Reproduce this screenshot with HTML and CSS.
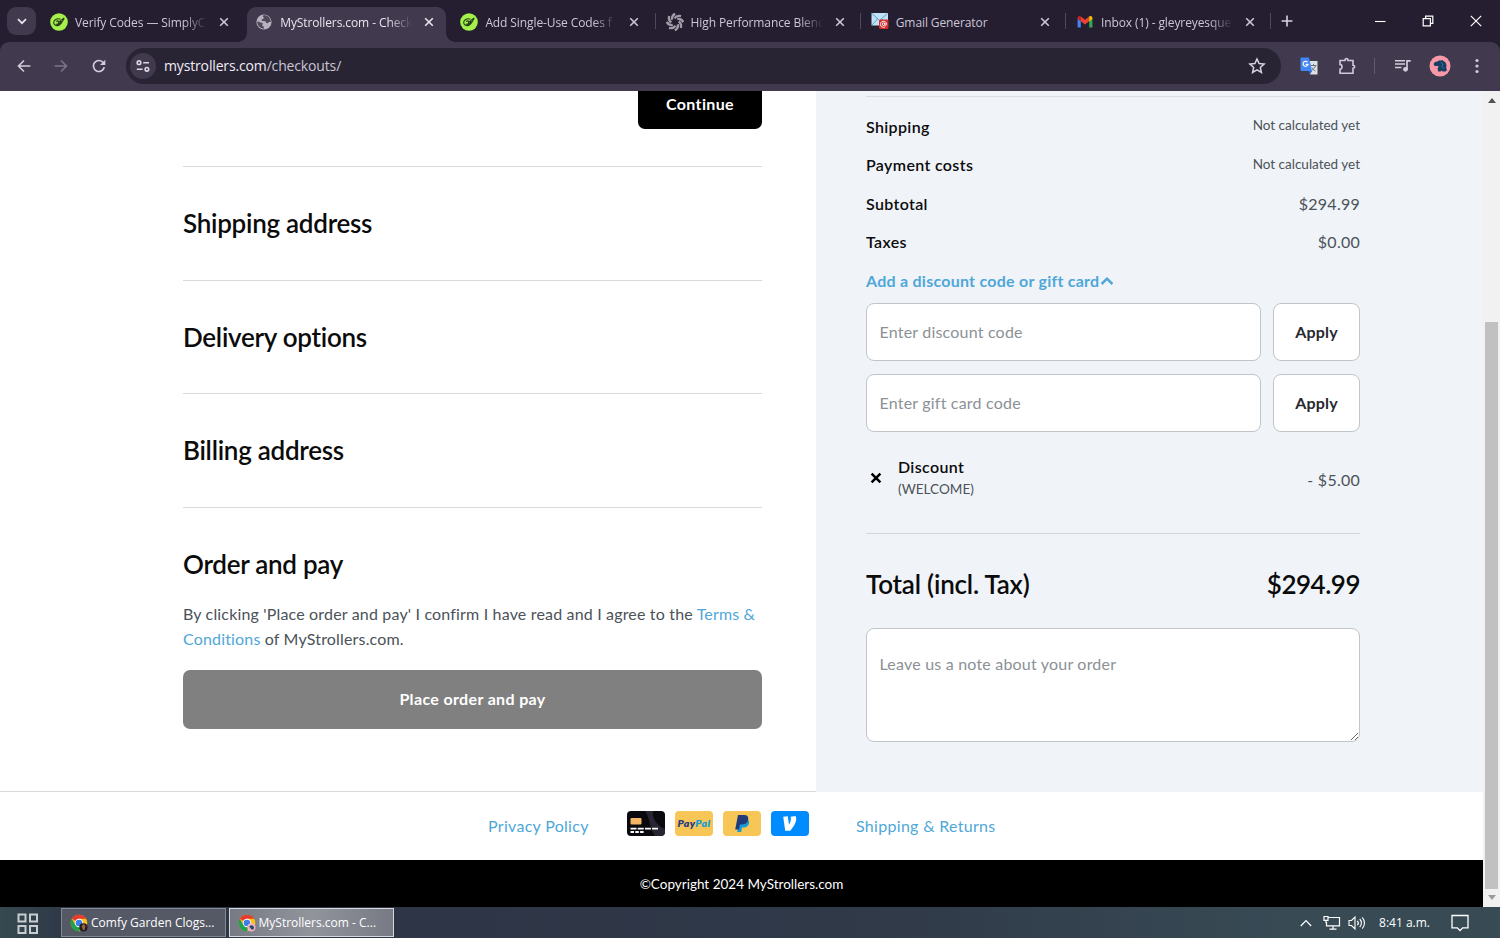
FILE: index.html
```
<!DOCTYPE html>
<html lang="en">
<head>
    <meta charset="utf-8">
    <title>MyStrollers.com - Checkout</title>
    <link rel="stylesheet" href="styles.css">
</head>
<body>
    <svg class="defs" width="0" height="0">
        <symbol id="close" viewBox="0 0 10 10"><path d="M1.2 1.2l7.6 7.6M8.8 1.2L1.2 8.8" fill="none" stroke="currentColor" stroke-width="1.6"/></symbol>
        <symbol id="simply" viewBox="0 0 18 18"><circle cx="9" cy="9" r="8.8" fill="#a5f04b"/><path d="M10.5 6.3C7 4.800 3.400 7.200 3.700 10c.3 2.700 4 3.400 6.200 1.500 1.400-1.200 2.600-3 4.300-6.300M6.300 8.600c1.400-1.500 2.700-.4 2.300.9l5.600-4.600M5.800 11c2 .8 4.200-.2 5.600-2.700" fill="none" stroke="#22391a" stroke-width="1.100"/></symbol>
        <symbol id="chrome" viewBox="0 0 18 18"><circle cx="9" cy="9" r="8.300" fill="#fbc116"/><path d="M9 9L1.800 4.850A8.300 8.300 0 0 1 16.200 4.850H9z" fill="#e33b2e"/><path d="M1.800 4.850A8.300 8.300 0 0 0 9 17.300L12.600 11 9 9 5.400 11z" fill="#22a04b"/><circle cx="9" cy="9" r="4.200" fill="#fff"/><circle cx="9" cy="9" r="3.300" fill="#3b7ded"/></symbol>
    </svg>

    <header class="tabstrip">
        <div class="tab-search"><svg width="10" height="7" viewBox="0 0 10 7"><path d="M1 1.200l4 4 4-4" fill="none" stroke="#e6e0ec" stroke-width="1.800"/></svg></div>
        <div class="tab">
            <svg class="favicon"><use href="#simply"/></svg>
            <span class="tab-title fade">Verify Codes — SimplyC</span>
            <svg class="tab-close"><use href="#close"/></svg>
        </div>
        <div class="tab active">
            <svg class="favicon" viewBox="0 0 18 18"><circle cx="9" cy="9" r="7.600" fill="#b6b0bf"/><path d="M8.800 1.900C7.600 3 7.600 3.800 8.600 4.300c.9.5.2 1.300-1 1.700-1.300.5-1.500 2 .2 2 2 0 3.100.3 3.300 1.500.2 1 1.500 1 2.300.1.500-.5 1.300-.6 2.400-.5A6.900 6.900 0 0 0 8.800 1.900zM2.200 8.600c1.400 0 2.400.7 3.500.9 1.800.2 2.600 1 1.800 2-.8.9-.3 1.600.6 1.800 1 .2 1 1 .6 2.500A6.900 6.900 0 0 1 2.200 8.600z" fill="#514959"/></svg>
            <span class="tab-title fade">MyStrollers.com - Check</span>
            <svg class="tab-close"><use href="#close"/></svg>
        </div>
        <div class="tab">
            <svg class="favicon"><use href="#simply"/></svg>
            <span class="tab-title fade">Add Single-Use Codes f</span>
            <svg class="tab-close"><use href="#close"/></svg>
        </div>
        <div class="tab divided">
            <svg class="favicon" viewBox="0 0 18 18">
                <g fill="none" stroke="#a19da8" stroke-width="2.300">
                    <path id="blade" d="M8.500 5.300Q11 2 15 3.200"/>
                    <use href="#blade" transform="rotate(45 9 9)"/>
                    <use href="#blade" transform="rotate(90 9 9)"/>
                    <use href="#blade" transform="rotate(135 9 9)"/>
                    <use href="#blade" transform="rotate(180 9 9)"/>
                    <use href="#blade" transform="rotate(225 9 9)"/>
                    <use href="#blade" transform="rotate(270 9 9)"/>
                    <use href="#blade" transform="rotate(315 9 9)"/>
                </g>
            </svg>
            <span class="tab-title fade">High Performance Blenc</span>
            <svg class="tab-close"><use href="#close"/></svg>
        </div>
        <div class="tab divided">
            <svg class="favicon" viewBox="0 0 18 18"><path d="M.5 0h16.500v12.500H.5z" fill="#bfe2f5"/><path d="M1 .5l7.500 7 8-7M1 12l5.500-6M11 6l5 5" fill="none" stroke="#5e9fc6" stroke-width="1"/><rect x="8" y="6.500" width="9.500" height="9.500" rx="1.500" fill="#d82c2c"/><circle cx="12.600" cy="11.200" r="1.300" fill="none" stroke="#fff"/><path d="M14 9.800v2c.2 1 1.700.8 1.600-.8-.2-3.800-6.200-3.600-6.200.4 0 2.700 2.800 3.500 4.800 2.500" fill="none" stroke="#fff" stroke-width=".9"/></svg>
            <span class="tab-title">Gmail Generator</span>
            <svg class="tab-close"><use href="#close"/></svg>
        </div>
        <div class="tab divided">
            <svg class="favicon" viewBox="0 0 18 18"><path d="M1.600 5v9.500h3.200V7.800z" fill="#4285f4"/><path d="M13.200 7.800v6.700h3.200V5z" fill="#34a853"/><path d="M1.600 5.200c0-2.200 2-2.700 3.300-1.700v5L1.600 6z" fill="#c5221f"/><path d="M4.800 3.500L9 6.700l4.200-3.200v4.800L9 11.400 4.800 8.300z" fill="#ea4335"/><path d="M13.200 3.500c1.400-1 3.200-.4 3.200 1.700V6l-3.200 2.400z" fill="#fbbc04"/></svg>
            <span class="tab-title fade">Inbox (1) - gleyreyesque</span>
            <svg class="tab-close"><use href="#close"/></svg>
        </div>
        <div class="new-tab"><svg width="12" height="12" viewBox="0 0 12 12"><path d="M6 .6v10.800M.6 6h10.800" stroke="#d9d2e2" stroke-width="1.600"/></svg></div>
        <div class="window-buttons">
            <svg width="12" height="12" viewBox="0 0 12 12"><path d="M1 6.500h10.500" stroke="#fff" stroke-width="1.100"/></svg>
            <svg width="12" height="12" viewBox="0 0 12 12"><path d="M1.200 3.600h7.200v7.200H1.200zM3.600 3.400V1.200h7.200v7.200H8.600" fill="none" stroke="#fff" stroke-width="1.200"/></svg>
            <svg width="12" height="12" viewBox="0 0 12 12"><path d="M.8.8l10.400 10.400M11.200.8L.8 11.200" stroke="#fff" stroke-width="1.200"/></svg>
        </div>
    </header>

    <nav class="toolbar">
        <div class="nav-buttons">
            <svg width="14" height="14" viewBox="0 0 14 14"><path d="M13.400 7H1.800M7 1.500L1.500 7 7 12.500" fill="none" stroke="#d3ccdc" stroke-width="1.600"/></svg>
            <svg width="14" height="14" viewBox="0 0 14 14"><path d="M.6 7h11.600M7 1.500L12.500 7 7 12.500" fill="none" stroke="#7d7489" stroke-width="1.600"/></svg>
            <svg width="14" height="14" viewBox="0 0 14 14"><path d="M12.300 8.300A5.500 5.500 0 1 1 11.300 3.600L12.600 5" fill="none" stroke="#d3ccdc" stroke-width="1.700"/><path d="M13.300.8v5.300H8z" fill="#d3ccdc"/></svg>
        </div>
        <div class="omnibox">
            <div class="site-info"><svg width="14" height="12" viewBox="0 0 14 12"><g fill="none" stroke="#dcd6e4" stroke-width="1.600"><circle cx="3" cy="2.700" r="1.800"/><path d="M7.200 2.700h5.800M.8 9.300h5.800"/><circle cx="10.900" cy="9.300" r="1.800"/></g></svg></div>
            <span class="url">mystrollers.com<span class="path">/checkouts/</span></span>
            <svg class="star" width="18" height="18" viewBox="0 0 18 18"><path d="M9 2l2.100 4.600 5 .5-3.800 3.300 1.100 5L9 12.800l-4.400 2.600 1.100-5L1.900 7.100l5-.5z" fill="none" stroke="#d9d3e2" stroke-width="1.500"/></svg>
        </div>
        <div class="extensions">
            <svg class="translate" width="18" height="18" viewBox="0 0 18 18"><path d="M7 4h10.500v13.500H10z" fill="#dde1e5"/><path d="M10.500 8.500h6M13.500 7v1.500M15.500 8.500c-.5 2.500-2 4-4 5M12 10.500c1 2 2 3 3.500 3.500" fill="none" stroke="#6b7681" stroke-width="1"/><path d="M.5.5h8.500L12 14H1.500a1 1 0 0 1-1-1z" fill="#4285f4"/><path d="M8.300 14H12l-2 3.500z" fill="#2f61bd"/><path d="M7.500 5.200A2.500 2.500 0 1 0 8 7.400H5.600" fill="none" stroke="#fff" stroke-width="1.200"/></svg>
            <svg class="puzzle" width="18" height="18" viewBox="0 0 18 18"><path d="M2 3.500h5C7 1 10 1 10 3.500h5v4.700c2.200 0 2.200 3 0 3V16.200H2v-3.900c2.700-.2 2.700-4.700 0-4.900z" fill="none" stroke="#d0c9d9" stroke-width="1.600"/></svg>
            <span class="divider"></span>
            <svg class="media" width="18" height="14" viewBox="0 0 18 14"><path d="M1 1.800h10M1 5.100h10M1 8.400h6.500" stroke="#d3ccdc" stroke-width="1.500"/><path d="M13 10V1.800h3.700" fill="none" stroke="#d3ccdc" stroke-width="1.700"/><circle cx="11.500" cy="10.300" r="2.400" fill="#d3ccdc"/></svg>
            <svg class="avatar" width="22" height="22" viewBox="0 0 22 22"><circle cx="11" cy="11" r="10.500" fill="#f799a7"/><path d="M4.500 9l1.500-2 2.500-.5L10 5.500l3.500-.2 3 2.200 1 2.500-.3 3 .8 2-1.500 1.500h-3l-1-1-.8 1H9.200l-.7-3.300 1.300-1.400-2-1-2 .5z" fill="#173f64"/><path d="M11.500 7l2.500 2-1 2.500 2 2" fill="none" stroke="#35749c" stroke-width="1"/></svg>
            <svg class="menu-dots" width="4" height="16" viewBox="0 0 4 16"><g fill="#d3ccdc"><circle cx="2" cy="2.500" r="1.600"/><circle cx="2" cy="8" r="1.600"/><circle cx="2" cy="13.500" r="1.600"/></g></svg>
        </div>
    </nav>

    <div class="viewport">
        <div class="page">
            <div class="columns">
                <main class="checkout">
                    <div class="continue-row"><button class="continue">Continue</button></div>
                    <section class="step"><h2>Shipping address</h2></section>
                    <section class="step"><h2>Delivery options</h2></section>
                    <section class="step"><h2>Billing address</h2></section>
                    <section class="step last">
                        <h2>Order and pay</h2>
                        <p>By clicking 'Place order and pay' I confirm I have read and I agree to the <a href="#">Terms &amp;<br>Conditions</a> of MyStrollers.com.</p>
                        <button class="place-order">Place order and pay</button>
                    </section>
                </main>
                <aside class="summary">
                    <div class="costs">
                        <div class="cost-row"><b>Shipping</b><small>Not calculated yet</small></div>
                        <div class="cost-row"><b>Payment costs</b><small>Not calculated yet</small></div>
                        <div class="cost-row"><b>Subtotal</b><span>$294.99</span></div>
                        <div class="cost-row"><b>Taxes</b><span>$0.00</span></div>
                    </div>
                    <a class="discount-toggle" href="#">Add a discount code or gift card<svg width="14" height="10" viewBox="0 0 14 10"><path d="M1.600 8L7 2.700 12.400 8" fill="none" stroke="currentColor" stroke-width="2.500"/></svg></a>
                    <div class="code-row">
                        <input type="text" placeholder="Enter discount code">
                        <button>Apply</button>
                    </div>
                    <div class="code-row">
                        <input type="text" placeholder="Enter gift card code">
                        <button>Apply</button>
                    </div>
                    <div class="discount">
                        <svg width="12" height="12" viewBox="0 0 12 12"><path d="M1.600 1.600l8.800 8.800M10.400 1.600l-8.800 8.800" stroke="#000" stroke-width="2.500"/></svg>
                        <div class="discount-name"><b>Discount</b><small>(WELCOME)</small></div>
                        <span class="amount">- $5.00</span>
                    </div>
                    <div class="total"><span>Total (incl. Tax)</span><span class="total-price">$294.99</span></div>
                    <textarea placeholder="Leave us a note about your order"></textarea>
                </aside>
            </div>
            <footer class="links">
                <a href="#">Privacy Policy</a>
                <div class="payments">
                    <svg width="38" height="25" viewBox="0 0 38 25"><rect width="38" height="25" rx="4" fill="#09090e"/><path d="M18 0h8c-1 9 5 15 12 18v3c0 2-2 4-4 4h-6C22 17 24 9 18 0z" fill="#272532"/><rect x="3.500" y="7" width="11" height="6.500" rx="1" fill="#f3b562"/><path d="M3.500 17.700h27.500" stroke="#fff" stroke-width="1.800" stroke-dasharray="6 1.200"/><path d="M3.500 21h13.500" stroke="#fff" stroke-width="1.800" stroke-dasharray="3.500 1.300"/></svg>
                    <svg width="38" height="25" viewBox="0 0 38 25"><rect width="38" height="25" rx="4" fill="#f7c657"/><text class="paypal" x="2.500" y="16" textLength="33" lengthAdjust="spacingAndGlyphs"><tspan fill="#263b80">Pay</tspan><tspan fill="#159bd2">Pal</tspan></text></svg>
                    <svg width="38" height="25" viewBox="0 0 38 25"><rect width="38" height="25" rx="4" fill="#f7c657"/><path d="M17 8h7c3.500 1 3 8.500-3.500 8.500h-1.500l-.8 4.500h-4z" fill="#179bd7"/><path d="M15 4h6.500c4 0 4.500 3.500 3 6.500-1 2.300-3 3-6 3h-1.500L16 18.500h-3.800z" fill="#213b7a"/></svg>
                    <svg width="38" height="25" viewBox="0 0 38 25"><rect width="38" height="25" rx="4" fill="#008cff"/><path d="M12.200 5.800l4.600-.5 1.200 8.500c1.500-2.400 2.500-5.500 1.600-8l5-.9c2.200 4.800-1.800 10.200-5.300 14.900h-5.100z" fill="#fff"/></svg>
                </div>
                <a href="#">Shipping &amp; Returns</a>
            </footer>
            <div class="copyright">©Copyright 2024 MyStrollers.com</div>
        </div>
        <div class="scrollbar">
            <svg width="8" height="5" viewBox="0 0 8 5"><path d="M4 0l4 5H0z" fill="#505050"/></svg>
            <div class="thumb"></div>
            <svg width="8" height="5" viewBox="0 0 8 5"><path d="M4 5l4-5H0z" fill="#9b9b9b"/></svg>
        </div>
    </div>

    <div class="taskbar">
        <svg class="start" width="22" height="22" viewBox="0 0 22 22"><g fill="none" stroke="#c8ced0" stroke-width="2"><path d="M1.500 1.500h7v7h-7zM13 1.500h7v7h-7zM1.500 13h7v7h-7zM13 13h7v7h-7z"/></g></svg>
        <div class="task">
            <svg width="18" height="18" viewBox="0 0 18 18"><use href="#chrome"/><circle cx="13.400" cy="13.400" r="4.100" fill="#241b1b"/><path d="M11.500 12l2-2 2 2-1 4h-1.500z" fill="#96604b"/></svg>
            <span>Comfy Garden Clogs...</span>
        </div>
        <div class="task current">
            <svg width="18" height="18" viewBox="0 0 18 18"><use href="#chrome"/><circle cx="13.400" cy="13.400" r="4.100" fill="#f0b0bd"/><path d="M11 12.500l3-1.500 2 2-.5 2.500h-2z" fill="#254a70"/></svg>
            <span>MyStrollers.com - C...</span>
        </div>
        <div class="tray">
            <svg width="12" height="8" viewBox="0 0 12 8"><path d="M.8 7L6 1.500 11.200 7" fill="none" stroke="#fff" stroke-width="1.200"/></svg>
            <svg class="network" width="18" height="16" viewBox="0 0 18 16"><path d="M5.500 2.500h11v8.300H3.500V7M10 11v3M6.500 14.200h7M1 1.500h4v3.800H1zM3 5.300V8" fill="none" stroke="#fff" stroke-width="1.200"/></svg>
            <svg class="volume" width="18" height="16" viewBox="0 0 18 16"><path d="M1 5.500h2.500L7 2v12l-3.500-3.500H1zM9.300 5.800c1.300 1.300 1.300 3.100 0 4.400M11.700 4c2.300 2.300 2.300 5.700 0 8M14.200 2.300c3 3.200 3 8.200 0 11.400" fill="none" stroke="#fff" stroke-width="1.100"/></svg>
            <span class="clock">8:41 a.m.</span>
            <svg class="notify" width="18" height="18" viewBox="0 0 18 18"><path d="M1 1.500h16v12.300h-5.300L9 16.500l-2.700-2.700H1z" fill="none" stroke="#fff" stroke-width="1.300"/></svg>
        </div>
    </div>
</body>
</html>
```
FILE: styles.css
```
* {
    box-sizing: border-box;
    margin: 0;
    padding: 0;
}

body {
    width: 1500px;
    height: 938px;
    overflow: hidden;
    display: flex;
    flex-direction: column;
    background: #241e30;
    font-family: Lato, sans-serif;
    font-size: 16px;
    font-variant-ligatures: none;
    color: #4b5259;
}

svg {
    display: block;
    flex-shrink: 0;
}

.defs {
    position: absolute;
}

a {
    color: #4fa7d8;
    text-decoration: none;
}

/* browser tabs */
.tabstrip {
    height: 42px;
    display: flex;
    padding-left: 7px;
    padding-top: 7px;
    font-family: "Open Sans", sans-serif;
}

.tab-search {
    width: 29px;
    height: 28px;
    border-radius: 9px;
    background: #41394d;
    display: flex;
    align-items: center;
    justify-content: center;
    margin-right: 6px;
}

.tab {
    position: relative;
    width: 199px;
    height: 35px;
    margin-right: 6.200px;
    padding: 0 12px 6px 8px;
    display: flex;
    align-items: center;
    color: #cdc6d8;
    font-size: 12px;
}

.tab.active {
    background: #41394d;
    border-radius: 9px 9px 0 0;
    color: #e9e4ef;
}

/* flared feet of the active tab */
.tab.active::before,
.tab.active::after {
    content: "";
    position: absolute;
    bottom: 0;
    width: 9px;
    height: 9px;
}

.tab.active::before {
    left: -9px;
    background: radial-gradient(circle at 0 0, transparent 8.5px, #41394d 9px);
}

.tab.active::after {
    right: -9px;
    background: radial-gradient(circle at 100% 0, transparent 8.5px, #41394d 9px);
}

.tab.divided::before {
    content: "";
    position: absolute;
    left: -3px;
    top: 6px;
    width: 1px;
    height: 16px;
    background: #50485c;
}

.favicon {
    width: 18px;
    height: 18px;
}

.tab-title {
    width: 133px;
    margin-left: 7px;
    padding-top: 2px;
    white-space: nowrap;
    letter-spacing: -.1px;
}

.tab-title.fade {
    -webkit-mask-image: linear-gradient(90deg, #000 108px, transparent 132px);
    mask-image: linear-gradient(90deg, #000 108px, transparent 132px);
}

.tab-close {
    width: 10px;
    height: 10px;
    margin-left: 11px;
}

.new-tab {
    border-left: 1px solid #50485c;
    height: 16px;
    margin: 6px 0 0 -3px;
    padding: 2px 0 0 10px;
}

.window-buttons {
    display: flex;
    gap: 36px;
    margin: 8px 18px 0 auto;
}

/* toolbar */
.toolbar {
    height: 49px;
    display: flex;
    align-items: center;
    padding-bottom: 1px;
    background: #41394d;
    border-radius: 9px 9px 0 0;
    font-family: "Open Sans", sans-serif;
}

.nav-buttons {
    width: 126px;
    padding-left: 16.500px;
    display: flex;
    gap: 23.500px;
}

.omnibox {
    width: 1155px;
    height: 36px;
    padding: 0 15px 0 4px;
    border-radius: 18px;
    background: #282434;
    display: flex;
    align-items: center;
}

.site-info {
    width: 26px;
    height: 26px;
    border-radius: 50%;
    background: #41394d;
    display: flex;
    align-items: center;
    justify-content: center;
}

.url {
    margin-left: 8px;
    padding-bottom: 1px;
    font-size: 14px;
    letter-spacing: -.15px;
    color: #f0ecf5;
}

.url .path {
    color: #cbc4d5;
}

.star {
    margin-left: auto;
}

.extensions {
    flex: 1;
    display: flex;
    align-items: center;
    padding-left: 19px;
}

.puzzle {
    margin-left: 20px;
}

.divider {
    width: 1px;
    height: 16px;
    margin-left: 18px;
    background: #62596e;
}

.media {
    margin-left: 19px;
}

.avatar {
    margin-left: 17px;
}

.menu-dots {
    margin-left: 24px;
}

/* page */
.viewport {
    height: 816px;
    display: flex;
    background: #fff;
}

.page {
    width: 1483px;
    display: flex;
    flex-direction: column;
}

.columns {
    height: 701px;
    display: flex;
}

.checkout {
    width: 816px;
    padding: 0 54px 0 183px;
    border-bottom: 1px solid #d5dadb;
}

button {
    font-family: Lato, sans-serif;
    font-size: 16px;
    font-weight: 700;
    font-variant-ligatures: none;
    letter-spacing: .35px;
    border: none;
}

.continue-row {
    height: 75px;
    display: flex;
    justify-content: flex-end;
}

.continue {
    width: 124px;
    height: 38px;
    padding-bottom: 14px;
    border-radius: 0 0 7px 7px;
    background: #000;
    color: #fff;
}

.step {
    height: 113.500px;
    padding-top: 39px;
    border-top: 1px solid #d8dadb;
}

.step h2,
.total {
    font-size: 26px;
    line-height: 34px;
    font-weight: 600;
    letter-spacing: -.27px;
    color: #0b0b0c;
}

.step.last {
    height: auto;
}

.step p {
    margin-top: 20px;
    line-height: 25px;
    letter-spacing: .17px;
    white-space: nowrap;
}

.place-order {
    width: 579px;
    height: 59px;
    margin-top: 19px;
    padding-bottom: 2px;
    border-radius: 7px;
    background: #808080;
    color: #fff;
}

/* order summary */
.summary {
    width: 667px;
    padding: 5px 123px 0 50px;
    background: #f0f4f8;
    letter-spacing: .25px;
}

.costs {
    border-top: 1px solid #d9dfe3;
    padding-top: 10px;
}

.cost-row {
    height: 38.500px;
    display: flex;
    align-items: center;
    justify-content: space-between;
}

.summary b {
    color: #0b0b0c;
    font-weight: 600;
    letter-spacing: .35px;
}

.cost-row small {
    font-size: 13.500px;
    letter-spacing: 0;
    padding-bottom: 2px;
}

.discount-toggle {
    height: 38px;
    display: flex;
    align-items: center;
    font-weight: 700;
}

.discount-toggle svg {
    margin: 2px 0 0 1px;
}

.code-row {
    display: flex;
    gap: 12px;
    margin-top: 4px;
}

.code-row + .code-row {
    margin-top: 13px;
}

.code-row input,
.code-row button,
textarea {
    height: 58px;
    border: 1px solid #bfc5c8;
    border-radius: 8px;
    background: #fff;
    font-family: Lato, sans-serif;
    font-size: 16px;
    font-variant-ligatures: none;
    letter-spacing: .2px;
}

.code-row input {
    width: 395px;
    padding: 0 12.500px 2px;
}

.code-row button {
    width: 87px;
    padding-bottom: 2px;
    color: #28282f;
}

::placeholder {
    color: #8b9196;
}

.discount {
    height: 102px;
    padding: 23px 0 0 4px;
    display: flex;
    border-bottom: 1px solid #d0d8dc;
}

.discount > svg {
    margin-top: 17px;
}

.discount-name {
    margin-left: 16px;
    display: flex;
    flex-direction: column;
    line-height: 23px;
}

.discount-name small {
    font-size: 13.600px;
    line-height: 22px;
    letter-spacing: 0;
}

.amount {
    margin: 15px 0 0 auto;
}

.total {
    margin-top: 33px;
    display: flex;
    justify-content: space-between;
    letter-spacing: -.2px;
}

.total-price {
    letter-spacing: -.5px;
}

textarea {
    display: block;
    width: 494px;
    height: 114px;
    margin-top: 27px;
    padding: 25px 12.500px;
    resize: vertical;
}

/* footer */
.links {
    height: 68px;
    display: flex;
    padding-left: 488px;
    letter-spacing: .3px;
}

.links a {
    line-height: 20px;
    margin-top: 24px;
}

.links a:first-child {
    width: 139px;
}

.payments {
    width: 229px;
    display: flex;
    gap: 10px;
    margin-top: 19px;
}

.paypal {
    font: italic 800 10px Lato, sans-serif;
}

.copyright {
    height: 47px;
    line-height: 48px;
    background: #000;
    color: #fff;
    font-size: 13.500px;
    text-align: center;
}

.scrollbar {
    width: 17px;
    background: #f1f1f1;
    display: flex;
    flex-direction: column;
    align-items: center;
    padding-top: 7px;
}

.thumb {
    width: 13px;
    height: 567px;
    margin: 219px 0 6px;
    background: #c1c1c1;
}

/* taskbar */
.taskbar {
    height: 31px;
    display: flex;
    align-items: center;
    background: linear-gradient(90deg, #35494f 0, #2f3948 60px, #2e3546 420px, #303a49 900px, #384b55 1300px, #384b55);
    font-family: "Open Sans", sans-serif;
    font-size: 12px;
    color: #fff;
}

.start {
    margin: 2px 22px 0 17px;
}

.task {
    width: 165px;
    height: 29px;
    margin-right: 2.500px;
    padding-left: 8px;
    border: 1px solid #858994;
    background: #555966;
    display: flex;
    align-items: center;
    gap: 3px;
    white-space: nowrap;
}

.task span {
    padding-bottom: 1px;
}

.task.current {
    border-color: #d6d8dc;
    background: linear-gradient(90deg, #777a84, #92949c 50%, #777a84);
}

.tray {
    margin-left: auto;
    padding-right: 31px;
    display: flex;
    align-items: center;
}

.network {
    margin-left: 11px;
}

.volume {
    margin-left: 7px;
}

.clock {
    margin-left: 13px;
    padding-bottom: 1px;
}

.notify {
    margin-left: 21px;
}
```
